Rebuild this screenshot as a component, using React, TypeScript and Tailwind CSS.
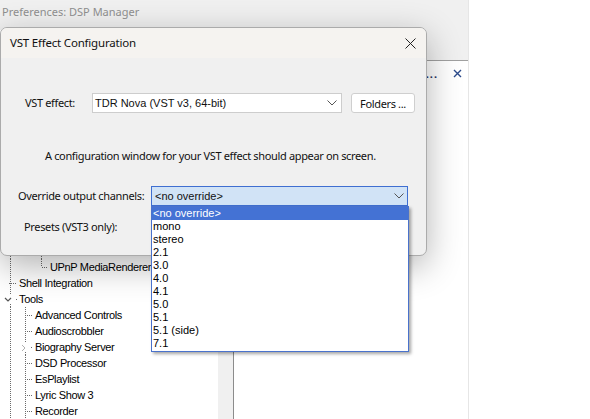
import React from 'react'

const ui = "font-['Noto_Sans',sans-serif]"
const classic = "font-['Liberation_Sans',Arial,sans-serif]"

const channelOptions = ['<no override>', 'mono', 'stereo', '2.1', '3.0', '4.0', '4.1', '5.0', '5.1', '5.1 (side)', '7.1']

type TreeRow = {
  label: string
  indent: number
  kind: 'leaf' | 'last' | 'open' | 'closed'
  verticals: number[]
}

const treeRows: TreeRow[] = [
  { label: 'UPnP MediaRenderer', indent: 50, kind: 'last', verticals: [10] },
  { label: 'Shell Integration', indent: 19, kind: 'leaf', verticals: [10] },
  { label: 'Tools', indent: 19, kind: 'open', verticals: [] },
  { label: 'Advanced Controls', indent: 35, kind: 'leaf', verticals: [10, 25] },
  { label: 'Audioscrobbler', indent: 35, kind: 'leaf', verticals: [10, 25] },
  { label: 'Biography Server', indent: 35, kind: 'closed', verticals: [10] },
  { label: 'DSD Processor', indent: 35, kind: 'leaf', verticals: [10, 25] },
  { label: 'EsPlaylist', indent: 35, kind: 'leaf', verticals: [10, 25] },
  { label: 'Lyric Show 3', indent: 35, kind: 'leaf', verticals: [10, 25] },
  { label: 'Recorder', indent: 35, kind: 'leaf', verticals: [10, 25] },
]

const dot = { stroke: '#6b6b6b', strokeWidth: 1, strokeDasharray: '1 1' }

function Connectors({ row }: { row: TreeRow }) {
  const stubEnd = row.indent - 2
  return (
    <svg width={row.indent} height={16} className="shrink-0">
      {row.verticals.map((x) => (
        <line key={x} x1={x + 0.5} y1={0} x2={x + 0.5} y2={16} {...dot} />
      ))}
      {row.kind === 'last' && (
        <>
          <line x1={41.5} y1={0} x2={41.5} y2={8} {...dot} />
          <line x1={42} y1={8.5} x2={stubEnd} y2={8.5} {...dot} />
        </>
      )}
      {row.kind === 'leaf' && (
        <line x1={row.indent - 10} y1={8.5} x2={stubEnd} y2={8.5} {...dot} />
      )}
      {row.kind === 'open' && (
        <>
          <line x1={10.5} y1={0} x2={10.5} y2={4} {...dot} />
          <line x1={10.5} y1={13} x2={10.5} y2={16} {...dot} />
          <polyline points="5,7 8,10 11,7" fill="none" stroke="#555" strokeWidth={1.2} />
          <line x1={16} y1={8.5} x2={17} y2={8.5} {...dot} />
          <line x1={25.5} y1={12} x2={25.5} y2={16} {...dot} />
        </>
      )}
      {row.kind === 'closed' && (
        <>
          <line x1={25.5} y1={0} x2={25.5} y2={4} {...dot} />
          <line x1={25.5} y1={13} x2={25.5} y2={16} {...dot} />
          <polyline points="22,6 25,9 22,12" fill="none" stroke="#b0b0b0" strokeWidth={1} />
          <line x1={31} y1={8.5} x2={33} y2={8.5} {...dot} />
        </>
      )}
    </svg>
  )
}

function Chevron() {
  return (
    <svg width="10" height="6" viewBox="0 0 10 6" className="shrink-0">
      <polyline points="0.5,0.5 5,5 9.5,0.5" fill="none" stroke="#555" strokeWidth="1" />
    </svg>
  )
}

export default function App() {
  return (
    <div className="relative w-[590px] h-[419px] overflow-hidden bg-white">
      {/* parent window */}
      <div className="absolute left-0 top-0 w-[469px] h-[419px] flex flex-col bg-[#f0f0f0] border-r border-[#e6e6e6]">
        <div className={`h-[30px] pl-[2px] pb-[6px] flex items-center text-[11px] text-[#8f8f8f] ${ui}`}>
          Preferences: DSP Manager
        </div>
        <div className="flex-1 flex min-h-0">
          <div className={`w-[218px] bg-white flex flex-col text-[11px] tracking-[-0.35px] text-black ${classic}`}>
            <svg width={50} height={229} className="shrink-0">
              <line x1={10.5} y1={0} x2={10.5} y2={229} {...dot} />
              <line x1={41.5} y1={100} x2={41.5} y2={229} {...dot} />
            </svg>
            {treeRows.map((row) => (
              <div key={row.label} className="flex h-[16px] items-center">
                <Connectors row={row} />
                <span className="whitespace-nowrap leading-none">{row.label}</span>
              </div>
            ))}
          </div>
          <div className="w-[15px] bg-[#f0f0f0]" />
          <div className="w-px bg-[#8c8c8c]" />
          <div className="flex-1 flex flex-col">
            <div className="h-[31px] bg-[#f0f0f0] border-b border-[#a0a0a0]" />
            <div className="flex-1 bg-white">
              <div className="flex justify-end items-center gap-[15px] pr-[6px] pt-[4px] h-[20px]">
                <span className="text-[11px] font-bold text-[#1e2f5c] leading-none tracking-[1px]">...</span>
                <svg width="9" height="9" viewBox="0 0 9 9">
                  <path d="M1 1 L8 8 M8 1 L1 8" stroke="#2b4a8b" strokeWidth="1.4" />
                </svg>
              </div>
            </div>
          </div>
        </div>
      </div>

      {/* VST dialog */}
      <div className={`absolute left-0 top-[27px] w-[427px] h-[229px] flex flex-col rounded-[7px] border border-[#ababab] bg-[#f0f0f0] overflow-hidden shadow-[0_10px_34px_rgba(0,0,0,0.3)] text-[11px] tracking-[-0.35px] text-[#111] ${ui}`}>
        <div className="h-[30px] shrink-0 bg-[#f5f3f0] flex items-center justify-between pl-[9px] pr-[10px]">
          <span className="text-[11.5px] tracking-[-0.2px]">VST Effect Configuration</span>
          <svg width="11" height="11" viewBox="0 0 11 11">
            <path d="M0.5 0.5 L10.5 10.5 M10.5 0.5 L0.5 10.5" stroke="#222" strokeWidth="1" />
          </svg>
        </div>
        <div className="flex flex-col">
          <div className="flex items-center pl-[24px] mt-[35px] h-[20px]">
            <span className="w-[67px] whitespace-nowrap">VST effect:</span>
            <div className={`w-[250px] h-[20px] flex items-center justify-between bg-white border border-[#cdcdcd] pl-[2px] pr-[4px] tracking-normal ${classic}`}>
              <span>TDR Nova (VST v3, 64-bit)</span>
              <Chevron />
            </div>
            <button className="ml-[9px] w-[64px] h-[20px] bg-white border border-[#cfcfcf] rounded-[3px] text-[11px] leading-none">
              Folders ...
            </button>
          </div>
          <div className="mt-[35px] h-[16px] leading-[16px] pl-[44px] whitespace-nowrap">
            A configuration window for your VST effect should appear on screen.
          </div>
          <div className="flex items-center pl-[17px] mt-[22px] h-[20px]">
            <span className="w-[133px] whitespace-nowrap">Override output channels:</span>
            <div className={`w-[257px] h-[20px] flex items-center justify-between bg-[#d1e3f6] border border-[#3f6fd1] pl-[3px] pr-[3px] tracking-normal ${classic}`}>
              <span>&lt;no override&gt;</span>
              <Chevron />
            </div>
          </div>
          <div className="flex items-center pl-[23px] mt-[13px] h-[16px]">
            <span className="whitespace-nowrap">Presets (VST3 only):</span>
          </div>
        </div>
      </div>

      {/* open dropdown list */}
      <div className={`absolute left-[151px] top-[206px] w-[258px] h-[146px] bg-white border border-[#4a72cc] shadow-[2px_2px_3px_rgba(0,0,0,0.35)] text-[11px] text-black ${classic}`}>
        {channelOptions.map((opt, i) => (
          <div
            key={opt}
            className={`h-[13px] leading-[13px] pl-[1px] ${i === 0 ? 'bg-[#4472d4] text-white' : ''}`}
          >
            {opt}
          </div>
        ))}
      </div>
    </div>
  )
}
